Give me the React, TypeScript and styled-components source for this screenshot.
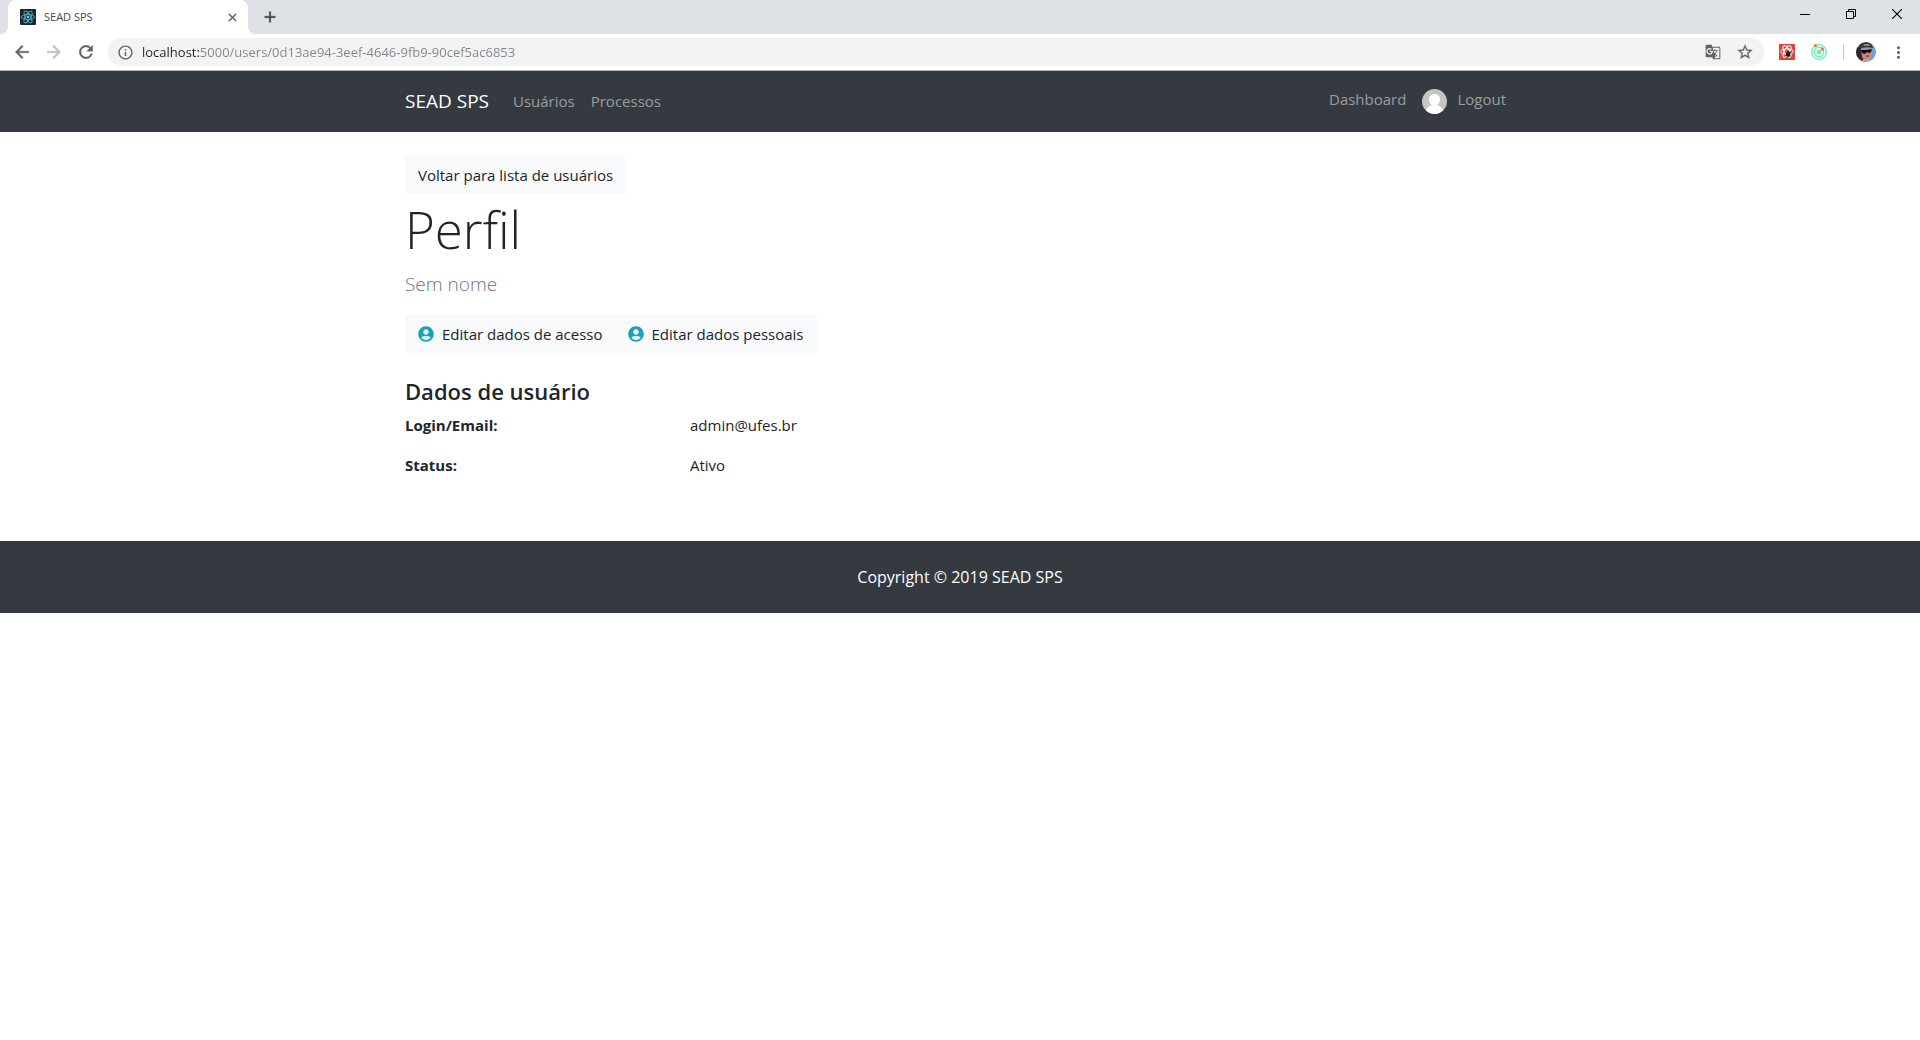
import React from "react";
import styled, { createGlobalStyle } from "styled-components";
import { FaUserCircle } from "react-icons/fa";
import {
  MdAdd,
  MdArrowBack,
  MdArrowForward,
  MdClose,
  MdGTranslate,
  MdInfoOutline,
  MdMoreVert,
  MdRefresh,
  MdStarBorder,
} from "react-icons/md";

const sans = `"Open Sans", "Noto Sans", sans-serif`;

const GlobalStyle = createGlobalStyle`
  *, *::before, *::after { box-sizing: border-box; }
  body {
    margin: 0;
    background: #fff;
    color: #212529;
    font-family: ${sans};
    font-size: 15px;
    line-height: 24px;
  }
  button, input { font: inherit; }
  a { text-decoration: none; }
  svg { display: block; flex: none; }
`;

/* ---------- Browser window ---------- */

const TabStrip = styled.div`
  display: flex;
  align-items: stretch;
  height: 34px;
  padding-left: 8px;
  background: #dee1e6;
`;

const Tab = styled.div`
  position: relative;
  display: flex;
  align-items: center;
  gap: 8px;
  width: 240px;
  padding: 0 10px 0 12px;
  border-radius: 8px 8px 0 0;
  background: #fff;
  &::before, &::after {
    content: "";
    position: absolute;
    bottom: 0;
    width: 8px;
    height: 8px;
  }
  &::before {
    left: -8px;
    background: radial-gradient(circle at 0 0, #dee1e6 8px, #fff 8px);
  }
  &::after {
    right: -8px;
    background: radial-gradient(circle at 100% 0, #dee1e6 8px, #fff 8px);
  }
`;

const TabTitle = styled.span`
  flex: 1;
  color: #45494d;
  font-size: 11px;
  line-height: 16px;
`;

const IconButton = styled.button<{
  $width?: number;
  $color?: string;
  $weight?: number;
}>`
  display: flex;
  align-items: center;
  justify-content: center;
  width: ${(p) => p.$width ?? 32}px;
  padding: 0;
  border: 0;
  background: transparent;
  color: ${(p) => p.$color ?? "#5f6368"};
  ${(p) =>
    p.$weight
      ? `svg path:not([fill="none"]) { stroke: currentColor; stroke-width: ${p.$weight}; }`
      : ""}
`;

const NewTab = styled(IconButton)`
  margin-left: 6px;
`;

const WindowButtons = styled.div`
  display: flex;
  align-items: stretch;
  height: 28px;
  margin-left: auto;
`;

const Toolbar = styled.div`
  display: flex;
  align-items: center;
  height: 37px;
  padding: 0 6px;
  border-bottom: 1px solid #b6b4b6;
  background: #fff;
`;

const AddressBar = styled.div`
  display: flex;
  align-items: center;
  flex: 1;
  height: 28px;
  margin: 0 7px 0 6px;
  padding: 0 3px 0 9px;
  border-radius: 14px;
  background: #f1f3f4;
  color: #5f6368;
`;

const Address = styled.input`
  flex: 1;
  min-width: 0;
  height: 20px;
  margin-left: 8px;
  padding: 0;
  border: 0;
  outline: 0;
  background: linear-gradient(90deg, #202124 58px, #80868b 58px);
  background-clip: text;
  -webkit-text-fill-color: transparent;
  font-size: 13px;
  line-height: 20px;
`;

const Separator = styled.span`
  width: 1px;
  height: 16px;
  margin: 0 6px 0 8px;
  background: #c8cbcf;
`;

/* ---------- Site ---------- */

const Container = styled.div`
  display: flex;
  align-items: center;
  width: 100%;
  max-width: 1140px;
  margin: 0 auto;
  padding: 0 15px;
`;

const Navbar = styled.nav`
  display: flex;
  min-height: 61px;
  padding-bottom: 2px;
  background: #343a40;
`;

const Brand = styled.a`
  margin-right: 16px;
  color: #fff;
  font-size: 19px;
  line-height: 30px;
`;

const NavLink = styled.a`
  display: flex;
  align-items: center;
  gap: 10px;
  padding: 8px;
  color: #9a9da0;
`;

const NavEnd = styled.div`
  display: flex;
  margin-left: auto;
  padding: 2px 1px 0 0;
  line-height: 20px;
  ${NavLink} {
    align-items: flex-start;
  }
`;

const Main = styled.main`
  display: block;
  width: 100%;
  max-width: 1140px;
  min-height: 409px;
  margin: 0 auto;
  padding: 24px 15px 47px;
`;

const ButtonLink = styled.a`
  display: inline-flex;
  align-items: center;
  gap: 8px;
  height: 38px;
  padding: 0 13px;
  border-radius: 4px;
  background: #f8f9fa;
  color: #212529;
`;

const ButtonGroup = styled.div`
  display: flex;
  ${ButtonLink}:first-child {
    border-radius: 4px 0 0 4px;
  }
  ${ButtonLink}:last-child {
    padding-left: 12px;
    border-radius: 0 4px 4px 0;
  }
`;

const Title = styled.h1`
  margin: 2px 0 6px;
  font-size: 51px;
  font-weight: 300;
  line-height: 67px;
`;

const Lead = styled.p`
  margin: 0 0 16px;
  color: #6c757d;
  font-size: 19px;
  font-weight: 300;
  line-height: 30px;
`;

const SectionTitle = styled.h2`
  margin: 23px 0 7px;
  font-size: 22px;
  font-weight: 600;
  line-height: 30px;
`;

const Details = styled.dl`
  display: grid;
  grid-template-columns: 285px 1fr;
  row-gap: 16px;
  margin: 0;
`;

const Term = styled.dt`
  font-weight: 700;
`;

const Value = styled.dd`
  margin: 0;
`;

const Footer = styled.footer`
  padding: 24px;
  background: #343a40;
  color: #fff;
  font-size: 16px;
  text-align: center;
`;

/* ---------- Drawings ---------- */

const ReactFavicon = () => (
  <svg width="16" height="16" viewBox="0 0 16 16">
    <rect width="16" height="16" rx="1" fill="#20232a" />
    <g fill="none" stroke="#4fb3cc" strokeWidth="0.9">
      <ellipse cx="8" cy="8" rx="6.6" ry="2.6" />
      <ellipse cx="8" cy="8" rx="6.6" ry="2.6" transform="rotate(60 8 8)" />
      <ellipse cx="8" cy="8" rx="6.6" ry="2.6" transform="rotate(120 8 8)" />
    </g>
    <circle cx="8" cy="8" r="1.3" fill="#61dafb" />
  </svg>
);

const ReactDevIcon = () => (
  <svg width="16" height="16" viewBox="0 0 16 16">
    <rect width="16" height="16" fill="#d8453e" />
    <g fill="none" stroke="#fff" strokeWidth="1">
      <ellipse cx="8" cy="7.5" rx="6.5" ry="2.6" />
      <ellipse cx="8" cy="7.5" rx="6.5" ry="2.6" transform="rotate(60 8 7.5)" />
      <ellipse cx="8" cy="7.5" rx="6.5" ry="2.6" transform="rotate(120 8 7.5)" />
    </g>
    <ellipse cx="9.2" cy="10" rx="2" ry="2.8" fill="#1d1414" transform="rotate(35 9.2 10)" />
    <path d="M6.5 9l5 3M8 12.5l4-5M9 7l1 6" stroke="#1d1414" strokeWidth="0.8" />
  </svg>
);

const RadarIcon = () => (
  <svg width="16" height="16" viewBox="0 0 16 16">
    <g fill="none" stroke="#62efb5">
      <circle cx="8" cy="8" r="7.3" strokeWidth="1.3" />
      <circle cx="8" cy="8" r="4.7" strokeWidth="1.4" />
    </g>
    <circle cx="8" cy="8" r="2.4" fill="#62efb5" />
    <circle cx="4.4" cy="1.7" r="1.6" fill="#f4743b" />
    <circle cx="11.3" cy="5" r="1.7" fill="#f4743b" />
  </svg>
);

const ProfilePhoto = () => (
  <svg width="20" height="20" viewBox="0 0 20 20">
    <clipPath id="photo">
      <circle cx="10" cy="10" r="10" />
    </clipPath>
    <g clipPath="url(#photo)">
      <rect width="20" height="20" fill="#6fa3d6" />
      <path d="M0 5l5 1 2 8 3 6H0z" fill="#3a2427" />
      <path d="M5 7l11-1 0 6-3 6-3 2-4-5z" fill="#c98a76" />
      <path d="M2 7Q3 0 10 0q6 0 7 6-7-2-15 1z" fill="#33352f" />
      <path d="M7 3q4-2 7 0l-1 1q-3-1-5 0z" fill="#9aa78d" />
      <path d="M5 8l5 0 6-1-1 3-2 1-2-1-2 2-3-1z" fill="#120d10" />
      <path d="M7 17l3 1 3-1 2 3H6z" fill="#d9a294" />
      <path d="M9 14l4-1-1 2z" fill="#6b2f2c" />
    </g>
  </svg>
);

const PlaceholderAvatar = () => (
  <svg width="25" height="25" viewBox="0 0 25 25">
    <clipPath id="avatar">
      <circle cx="12.5" cy="12.5" r="12.5" />
    </clipPath>
    <g clipPath="url(#avatar)">
      <rect width="25" height="25" fill="#c5c5c5" />
      <path d="M12.5 5c3.4 0 5.500 2.300 5.500 5.600 0 2.500-1.200 4.500-2.700 5.600 3.500.9 5.700 3 6 8.800H3.700c.3-5.800 2.500-7.900 6-8.800C8.200 15.100 7 13.100 7 10.600 7 7.300 9.100 5 12.500 5z" fill="#fff" />
    </g>
  </svg>
);

const MinimizeIcon = () => (
  <svg width="10" height="10" viewBox="0 0 10 10">
    <path d="M0 5.500h10" stroke="#000" />
  </svg>
);

const RestoreIcon = () => (
  <svg width="10" height="10" viewBox="0 0 10 10" fill="none" stroke="#000">
    <path d="M.5 2.500h7v7h-7zM2.500 2.500v-2h7v7h-2" />
  </svg>
);

const CloseIcon = () => (
  <svg width="10" height="10" viewBox="0 0 10 10">
    <path d="M0 0l10 10M10 0L0 10" stroke="#000" strokeWidth="1.1" />
  </svg>
);

export default function App() {
  return (
    <>
      <GlobalStyle />
      <header>
        <TabStrip>
          <Tab>
            <ReactFavicon />
            <TabTitle>SEAD SPS</TabTitle>
            <IconButton $width={12} $weight={1} aria-label="Fechar guia">
              <MdClose size={13} />
            </IconButton>
          </Tab>
          <NewTab $color="#3c4043" $weight={0.5} aria-label="Nova guia">
            <MdAdd size={18} />
          </NewTab>
          <WindowButtons>
            <IconButton $width={46} aria-label="Minimizar">
              <MinimizeIcon />
            </IconButton>
            <IconButton $width={46} aria-label="Restaurar">
              <RestoreIcon />
            </IconButton>
            <IconButton $width={46} aria-label="Fechar">
              <CloseIcon />
            </IconButton>
          </WindowButtons>
        </TabStrip>
        <Toolbar>
          <IconButton $weight={0.5} aria-label="Voltar">
            <MdArrowBack size={20} />
          </IconButton>
          <IconButton $color="#bbbdbf" $weight={0.5} aria-label="Avançar">
            <MdArrowForward size={20} />
          </IconButton>
          <IconButton $weight={0.5} aria-label="Recarregar">
            <MdRefresh size={20} />
          </IconButton>
          <AddressBar>
            <MdInfoOutline size={17} />
            <Address
              aria-label="Endereço"
              spellCheck={false}
              defaultValue="localhost:5000/users/0d13ae94-3eef-4646-9fb9-90cef5ac6853"
            />
            <IconButton aria-label="Traduzir">
              <MdGTranslate size={16} />
            </IconButton>
            <IconButton $weight={0.3} aria-label="Favoritar">
              <MdStarBorder size={18} />
            </IconButton>
          </AddressBar>
          <IconButton aria-label="React Developer Tools">
            <ReactDevIcon />
          </IconButton>
          <IconButton aria-label="Extensão">
            <RadarIcon />
          </IconButton>
          <Separator />
          <IconButton aria-label="Perfil do navegador">
            <ProfilePhoto />
          </IconButton>
          <IconButton aria-label="Menu">
            <MdMoreVert size={19} />
          </IconButton>
        </Toolbar>
      </header>

      <Navbar>
        <Container>
          <Brand href="#">SEAD SPS</Brand>
          <NavLink href="#">Usuários</NavLink>
          <NavLink href="#">Processos</NavLink>
          <NavEnd>
            <NavLink href="#">Dashboard</NavLink>
            <NavLink href="#">
              <PlaceholderAvatar />
              Logout
            </NavLink>
          </NavEnd>
        </Container>
      </Navbar>

      <Main>
        <ButtonLink href="#">Voltar para lista de usuários</ButtonLink>
        <Title>Perfil</Title>
        <Lead>Sem nome</Lead>
        <ButtonGroup>
          <ButtonLink href="#">
            <FaUserCircle size={16} color="#17a2b8" />
            Editar dados de acesso
          </ButtonLink>
          <ButtonLink href="#">
            <FaUserCircle size={16} color="#17a2b8" />
            Editar dados pessoais
          </ButtonLink>
        </ButtonGroup>
        <SectionTitle>Dados de usuário</SectionTitle>
        <Details>
          <Term>Login/Email:</Term>
          <Value>admin@ufes.br</Value>
          <Term>Status:</Term>
          <Value>Ativo</Value>
        </Details>
      </Main>

      <Footer>Copyright © 2019 SEAD SPS</Footer>
    </>
  );
}
